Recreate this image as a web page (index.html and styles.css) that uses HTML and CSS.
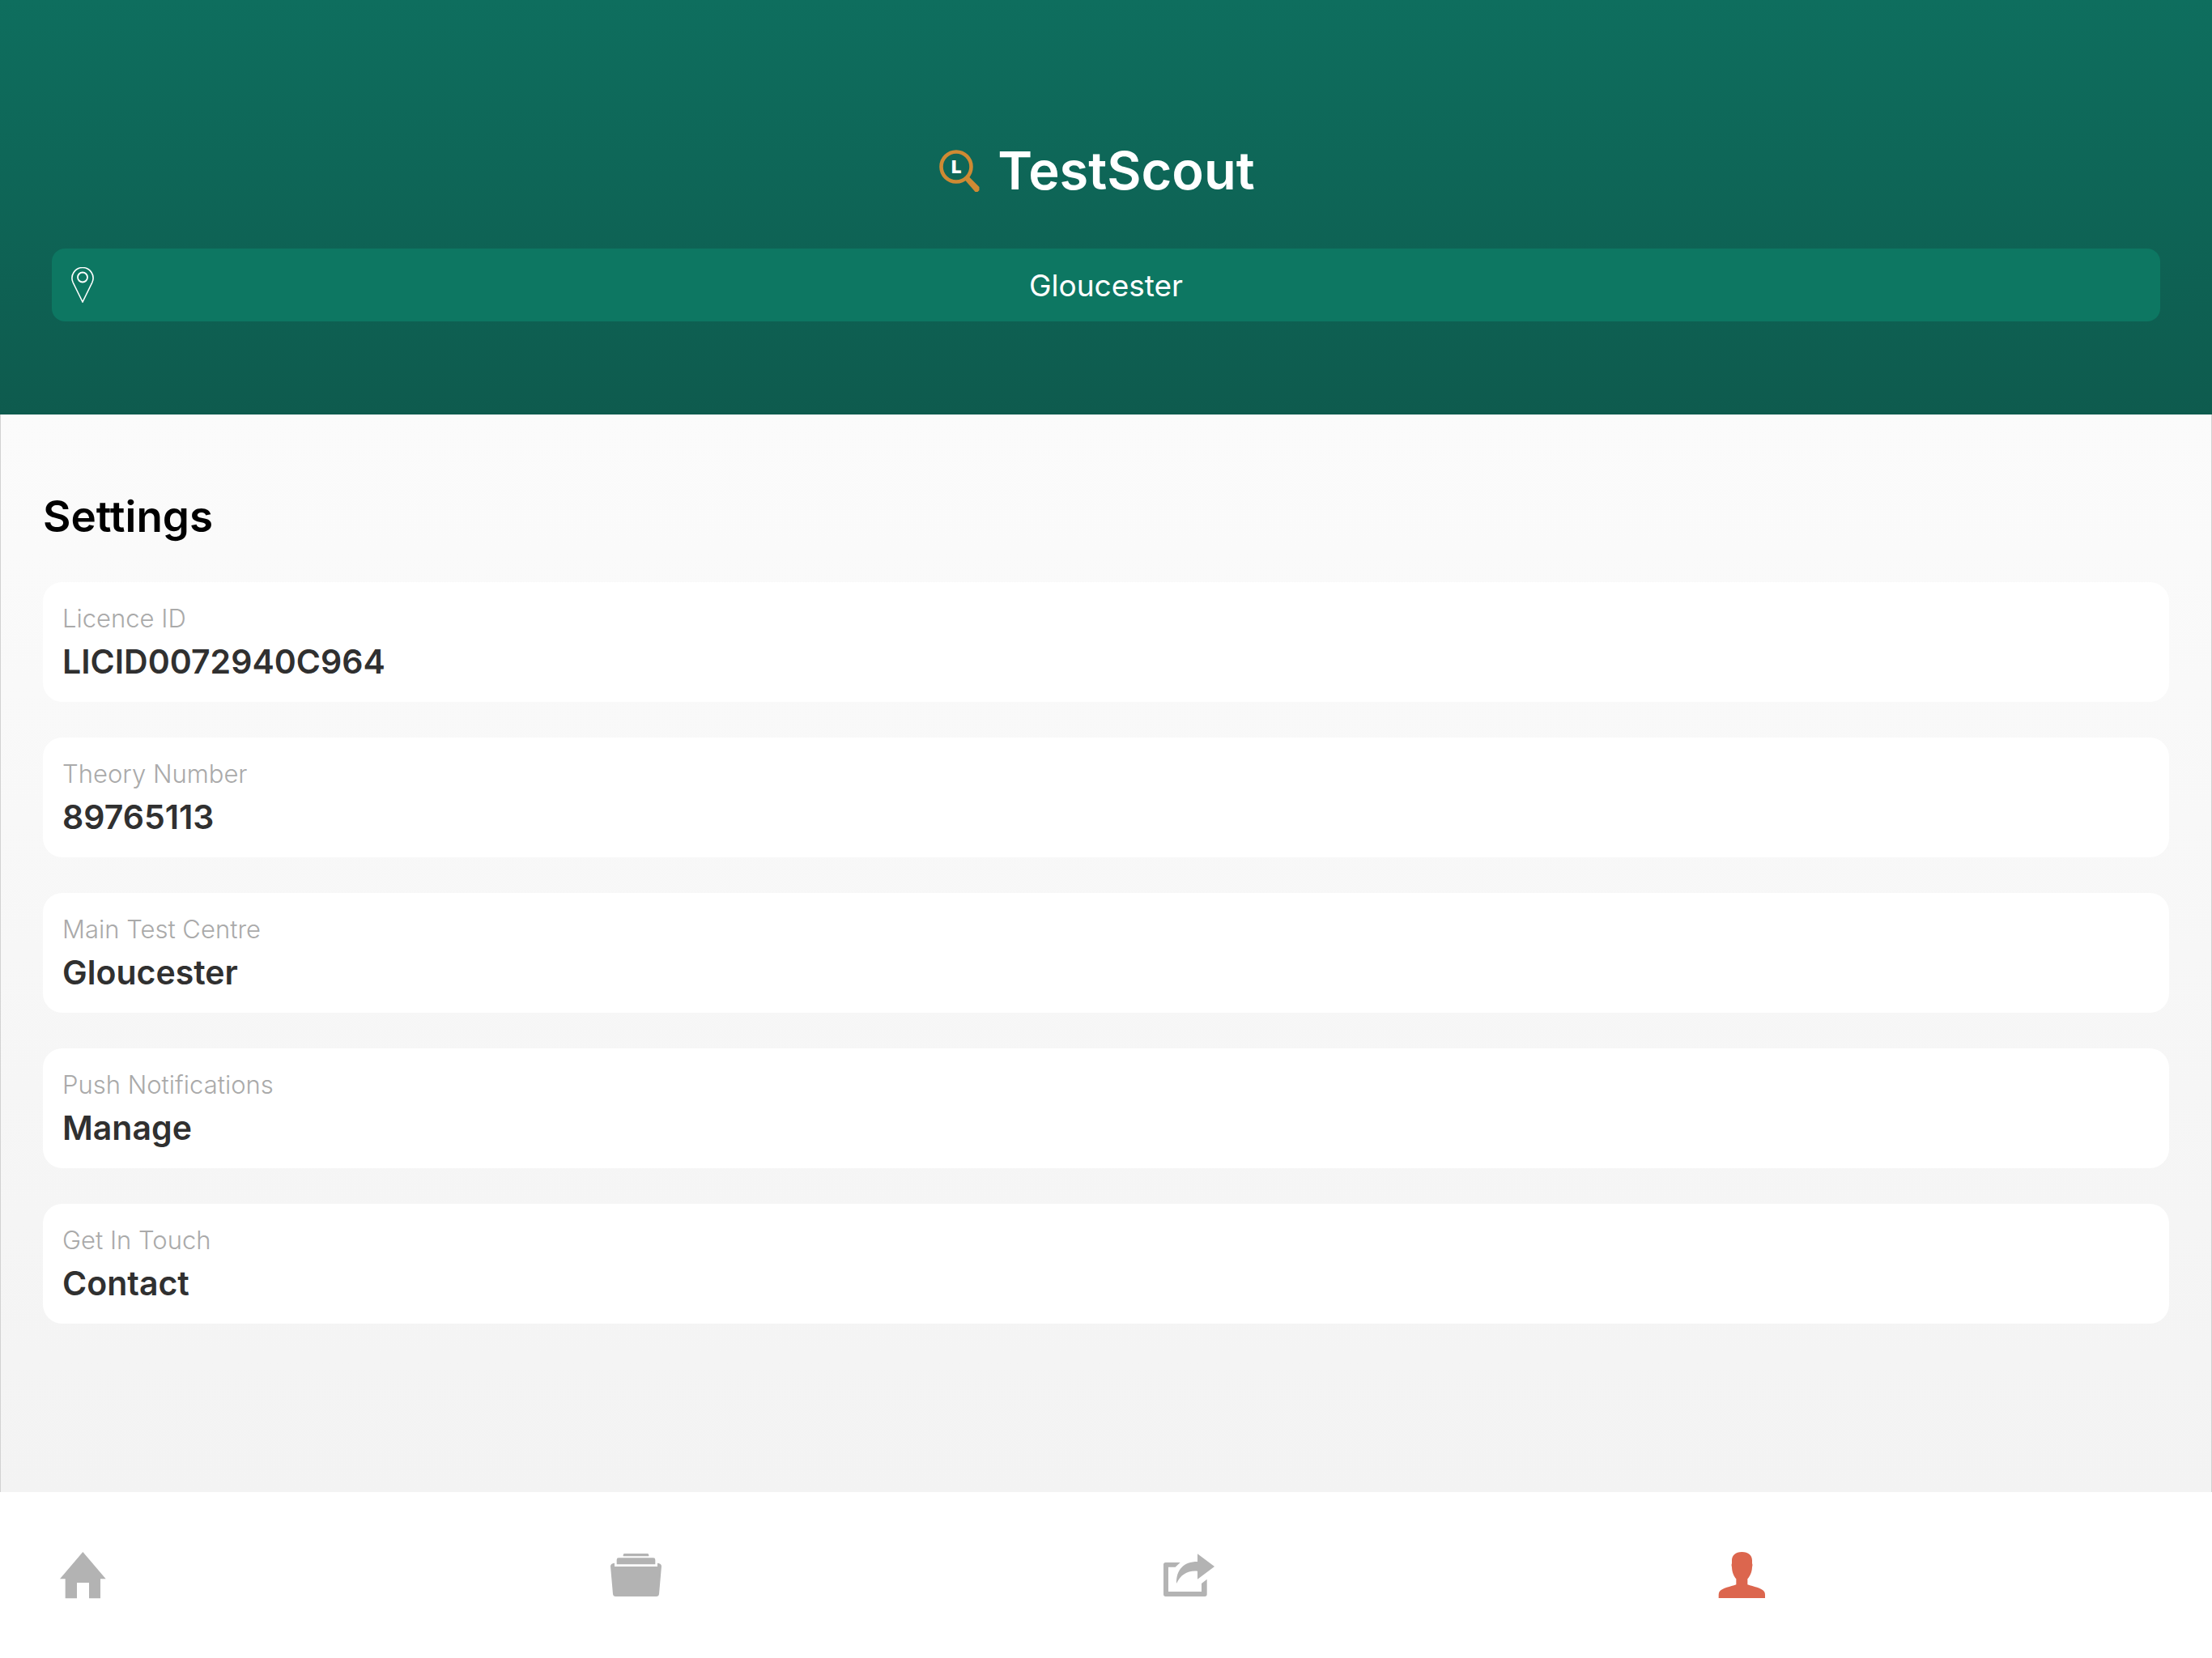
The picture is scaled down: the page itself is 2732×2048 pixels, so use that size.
FILE: index.html
```
<!DOCTYPE html>
<html lang="en">
<head>
<meta charset="utf-8">
<meta name="viewport" content="width=device-width, initial-scale=1">
<title>TestScout – Settings</title>
<link rel="stylesheet" href="styles.css">
</head>
<body>
<header class="header">
  <div class="brand">
    <svg class="brand-icon" viewBox="0 0 52 52" aria-hidden="true">
      <circle cx="21" cy="21" r="18.500" fill="none" stroke="#cf8a33" stroke-width="4.600"/>
      <path d="M31.500 37 36.500 33 49.500 46V50L47.500 52H44.500Z" fill="#cf8a33"/>
      <text class="brand-letter" x="15" y="29">L</text>
    </svg>
    <h1 class="brand-name">TestScout</h1>
  </div>
  <button class="location" type="button">
    <svg class="location-icon" viewBox="0 0 28 44" aria-hidden="true">
      <path d="M14 43 2.200 19A13 13 0 1 1 25.800 19Z" fill="none" stroke="#fff" stroke-width="1.600"/>
      <circle cx="14" cy="12.500" r="6" fill="none" stroke="#fff" stroke-width="1.800"/>
    </svg>
    <span>Gloucester</span>
  </button>
</header>

<main class="main">
  <h2 class="title">Settings</h2>
  <div class="cards">
    <button class="card" type="button"><span class="card-label">Licence ID</span><span class="card-value">LICID0072940C964</span></button>
    <button class="card" type="button"><span class="card-label">Theory Number</span><span class="card-value">89765113</span></button>
    <button class="card" type="button"><span class="card-label">Main Test Centre</span><span class="card-value">Gloucester</span></button>
    <button class="card" type="button"><span class="card-label">Push Notifications</span><span class="card-value">Manage</span></button>
    <button class="card" type="button"><span class="card-label">Get In Touch</span><span class="card-value">Contact</span></button>
  </div>
</main>

<nav class="tabs" aria-label="Main">
  <a class="tab" href="#home" aria-label="Home">
    <svg viewBox="30 42 192 192" aria-hidden="true"><path d="M127 51 212 151H192V223H150V165H105V223H62V151H42Z"/></svg>
  </a>
  <a class="tab" href="#tests" aria-label="Tests">
    <svg viewBox="39 42 192 192" aria-hidden="true"><path d="M89 67V62Q89 57 94 57H179Q184 57 184 62V67ZM65 97V80Q65 73 72 73H201Q208 73 208 80V97ZM57 92V105H216V92Q231 94 231 104L222 207Q221 216 212 216H61Q52 216 51 207L42 104Q42 94 57 92Z"/></svg>
  </a>
  <a class="tab" href="#share" aria-label="Share">
    <svg viewBox="48 42 192 192" aria-hidden="true"><path d="M113 90 95 107H69V198H192V168L212 152V208Q212 216 204 216H59Q51 216 51 208V98Q51 90 59 90ZM177 58 240 105 177 152V122C140 119 115 135 99 168C98 117 125 87 177 87Z"/></svg>
  </a>
  <a class="tab tab-active" href="#settings" aria-label="Settings" aria-current="page">
    <svg viewBox="42 42 192 192" aria-hidden="true"><path d="M139 51C164 51 177 64 177 82V93Q180 98 177 108C176 128 168 142 160 151V172C183 180 211 184 222 198Q225 202 225 210V222H53V210Q53 202 56 198C67 184 97 180 118 172V151C110 142 103 128 102 108Q99 98 102 93V82C102 64 115 51 139 51Z"/></svg>
  </a>
</nav>
</body>
</html>
```
FILE: styles.css
```
* {
  box-sizing: border-box;
}

body {
  margin: 0;
  min-height: 100vh;
  display: flex;
  flex-direction: column;
  background: #fff;
  font-family: Inter, "Noto Sans", sans-serif;
}

h1,
h2 {
  margin: 0;
}

button {
  border: 0;
  font: inherit;
  cursor: pointer;
}

.header {
  padding: 179px 64px 115px;
  background: linear-gradient(#0e6e5e, #0e5b4e);
}

.brand {
  display: flex;
  justify-content: center;
  align-items: center;
  gap: 20px;
  height: 64px;
  margin-bottom: 64px;
  padding-right: 22px;
}

.brand-icon {
  width: 52px;
  height: 52px;
}

.brand-letter {
  font-size: 22px;
  font-weight: 900;
  fill: #fff;
}

.brand-name {
  color: #fff;
  font-size: 65px;
  font-weight: 600;
  line-height: 64px;
}

.location {
  display: grid;
  grid-template-columns: 1fr auto 1fr;
  align-items: center;
  width: 100%;
  height: 90px;
  padding: 0 24px;
  border-radius: 16px;
  background: #0d7762;
  color: #fff;
  font-size: 37px;
}

.location-icon {
  width: 28px;
  height: 44px;
}

.main {
  flex: 1;
  padding: 94px 52px 64px;
  border: solid #d2d2d2;
  border-width: 0 1px;
  background: linear-gradient(#fbfbfb, #f3f3f3);
}

.title {
  margin-bottom: 49px;
  color: #000;
  font-size: 53px;
  font-weight: 600;
  line-height: 64px;
}

.cards {
  display: grid;
  gap: 44px;
}

.card {
  display: flex;
  flex-direction: column;
  padding: 21px 24px;
  border-radius: 24px;
  background: #fff;
  text-align: left;
}

.card-label {
  color: #aaa;
  font-size: 31px;
  font-weight: 300;
  line-height: 48px;
}

.card-value {
  color: #303030;
  font-size: 41px;
  font-weight: 600;
  line-height: 58px;
}

.tabs {
  display: grid;
  grid-template-columns: repeat(4, 1fr);
  padding: 71px 0 70px;
  background: #fff;
}

.tab {
  display: flex;
  padding-left: 70px;
  color: #b3b3b3;
}

.tab svg {
  width: 64px;
  height: 64px;
  fill: currentColor;
}

.tab-active {
  color: #dc664e;
}
```
